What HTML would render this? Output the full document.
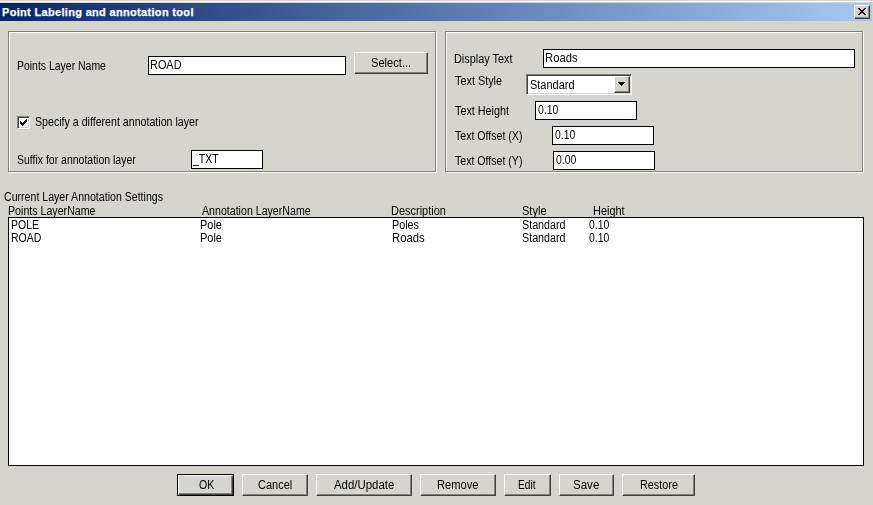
<!DOCTYPE html>
<html><head><meta charset="utf-8">
<style>
*{margin:0;padding:0;box-sizing:border-box}
html,body{width:873px;height:505px;overflow:hidden;background:#d5d4cd}
body{position:relative;font-family:"Liberation Sans",sans-serif;font-size:12px;color:#000}
.a{position:absolute}
.t{position:absolute;white-space:nowrap;line-height:14px;font-size:12px;transform-origin:0 0}
.title{position:absolute;left:0;top:3px;width:872px;height:18px;background:linear-gradient(to right,#0a246a,#a6caf0)}
.grp{position:absolute;border:1px solid #808080;box-shadow:inset 1px 1px 0 #fff,1px 1px 0 #fff}
.tb{position:absolute;background:#fff;border:1px solid #000}
.btn{position:absolute;background:#d5d4cd;border-top:1px solid #fff;border-left:1px solid #fff;border-right:1px solid #404040;border-bottom:1px solid #404040;box-shadow:inset -1px -1px 0 #808080}
.sunk{position:absolute;background:#fff;border-top:1px solid #808080;border-left:1px solid #808080;border-right:1px solid #fff;border-bottom:1px solid #fff;box-shadow:inset 1px 1px 0 #404040,inset -1px -1px 0 #d5d4cd}
</style></head><body>
<div class="a" style="left:0;top:0;width:873px;height:1px;background:#d5d4cd"></div>
<div class="a" style="left:0;top:1px;width:873px;height:1px;background:#fff"></div>
<div class="title"></div>
<div class="a" style="left:2px;top:5px;color:#fff;font-weight:bold;font-size:11px;line-height:14px;white-space:nowrap;letter-spacing:0.32px;-webkit-text-stroke:0.25px #fff">Point Labeling and annotation tool</div>
<div class="btn" style="left:854px;top:5px;width:16px;height:14px"></div>
<svg class="a" style="left:854px;top:5px" width="16" height="14" shape-rendering="crispEdges"><g fill="#000"><rect x="4" y="3" width="2" height="1"/><rect x="10" y="3" width="2" height="1"/><rect x="5" y="4" width="2" height="1"/><rect x="9" y="4" width="2" height="1"/><rect x="6" y="5" width="4" height="1"/><rect x="7" y="6" width="2" height="1"/><rect x="6" y="7" width="4" height="1"/><rect x="5" y="8" width="2" height="1"/><rect x="9" y="8" width="2" height="1"/><rect x="4" y="9" width="2" height="1"/><rect x="10" y="9" width="2" height="1"/></g></svg>
<div class="grp" style="left:8px;top:31px;width:428px;height:141px"></div>
<div class="grp" style="left:445px;top:31px;width:418px;height:141px"></div>
<div class="tb" style="left:148px;top:56px;width:198px;height:19px"></div>
<div class="tb" style="left:191px;top:150px;width:72px;height:19px"></div>
<div class="tb" style="left:543px;top:49px;width:312px;height:19px"></div>
<div class="tb" style="left:535px;top:101px;width:102px;height:19px"></div>
<div class="tb" style="left:552px;top:126px;width:102px;height:19px"></div>
<div class="tb" style="left:553px;top:151px;width:102px;height:19px"></div>
<div class="btn" style="left:354px;top:52px;width:74px;height:22px"></div>
<div class="sunk" style="left:17px;top:116px;width:13px;height:13px"></div>
<svg class="a" style="left:17px;top:116px" width="13" height="13" shape-rendering="crispEdges"><g fill="#000"><rect x="9" y="3" width="1" height="1"/><rect x="8" y="4" width="2" height="1"/><rect x="3" y="5" width="1" height="1"/><rect x="7" y="5" width="3" height="1"/><rect x="3" y="6" width="2" height="1"/><rect x="6" y="6" width="3" height="1"/><rect x="3" y="7" width="5" height="1"/><rect x="4" y="8" width="3" height="1"/><rect x="5" y="9" width="1" height="1"/></g></svg>
<div class="sunk" style="left:526px;top:74px;width:106px;height:21px"></div>
<div class="btn" style="left:614px;top:76px;width:16px;height:17px"></div>
<svg class="a" style="left:614px;top:76px" width="15" height="17" shape-rendering="crispEdges"><g fill="#000"><rect x="4" y="6" width="7" height="1"/><rect x="5" y="7" width="5" height="1"/><rect x="6" y="8" width="3" height="1"/><rect x="7" y="9" width="1" height="1"/></g></svg>
<div class="tb" style="left:8px;top:217px;width:856px;height:249px"></div>
<div class="a" style="left:177px;top:474px;width:57px;height:22px;background:#000"></div>
<div class="btn" style="left:178px;top:475px;width:55px;height:20px"></div>
<div class="btn" style="left:242px;top:474px;width:66px;height:22px"></div>
<div class="btn" style="left:316px;top:474px;width:96px;height:22px"></div>
<div class="btn" style="left:420px;top:474px;width:76px;height:22px"></div>
<div class="btn" style="left:504px;top:474px;width:47px;height:22px"></div>
<div class="btn" style="left:559px;top:474px;width:55px;height:22px"></div>
<div class="btn" style="left:622px;top:474px;width:73px;height:22px"></div>
<div class="a" style="left:0;top:0;width:873px;height:505px;will-change:transform">
<div class="t" style="left:17.13px;top:59px;transform:scaleX(0.8713)">Points Layer Name</div>
<div class="t" style="left:150.09px;top:58px;transform:scaleX(0.9091)">ROAD</div>
<div class="t" style="left:35.11px;top:115px;transform:scaleX(0.8859)">Specify a different annotation layer</div>
<div class="t" style="left:17.13px;top:153px;transform:scaleX(0.8741)">Suffix for annotation layer</div>
<div class="t" style="left:193.00px;top:152px;transform:scaleX(0.8750)">_TXT</div>
<div class="t" style="left:454.09px;top:52px;transform:scaleX(0.9062)">Display Text</div>
<div class="t" style="left:545.06px;top:51px;transform:scaleX(0.9394)">Roads</div>
<div class="t" style="left:455.00px;top:74px;transform:scaleX(0.9038)">Text Style</div>
<div class="t" style="left:530.09px;top:78px;transform:scaleX(0.9149)">Standard</div>
<div class="t" style="left:455.00px;top:104px;transform:scaleX(0.9000)">Text Height</div>
<div class="t" style="left:538.00px;top:103px;transform:scaleX(0.8696)">0.10</div>
<div class="t" style="left:455.00px;top:129px;transform:scaleX(0.8816)">Text Offset (X)</div>
<div class="t" style="left:555.00px;top:128px;transform:scaleX(0.8696)">0.10</div>
<div class="t" style="left:455.00px;top:154px;transform:scaleX(0.8816)">Text Offset (Y)</div>
<div class="t" style="left:556.00px;top:153px;transform:scaleX(0.8696)">0.00</div>
<div class="t" style="left:4.12px;top:190px;transform:scaleX(0.8827)">Current Layer Annotation Settings</div>
<div class="t" style="left:8.11px;top:204px;transform:scaleX(0.8866)">Points LayerName</div>
<div class="t" style="left:202.00px;top:204px;transform:scaleX(0.8852)">Annotation LayerName</div>
<div class="t" style="left:391.09px;top:204px;transform:scaleX(0.9138)">Description</div>
<div class="t" style="left:522.08px;top:204px;transform:scaleX(0.9200)">Style</div>
<div class="t" style="left:593.09px;top:204px;transform:scaleX(0.9118)">Height</div>
<div class="t" style="left:11.12px;top:218px;transform:scaleX(0.8750)">POLE</div>
<div class="t" style="left:200.09px;top:218px;transform:scaleX(0.9130)">Pole</div>
<div class="t" style="left:392.10px;top:218px;transform:scaleX(0.8966)">Poles</div>
<div class="t" style="left:522.11px;top:218px;transform:scaleX(0.8936)">Standard</div>
<div class="t" style="left:589.00px;top:218px;transform:scaleX(0.8696)">0.10</div>
<div class="t" style="left:11.12px;top:231px;transform:scaleX(0.8750)">ROAD</div>
<div class="t" style="left:200.09px;top:231px;transform:scaleX(0.9130)">Pole</div>
<div class="t" style="left:392.06px;top:231px;transform:scaleX(0.9394)">Roads</div>
<div class="t" style="left:522.11px;top:231px;transform:scaleX(0.8936)">Standard</div>
<div class="t" style="left:589.00px;top:231px;transform:scaleX(0.8696)">0.10</div>
<div class="t" style="left:371.07px;top:56px;transform:scaleX(0.9268)">Select...</div>
<div class="t" style="left:199.00px;top:478px;transform:scaleX(0.8824)">OK</div>
<div class="t" style="left:258.08px;top:478px;transform:scaleX(0.9167)">Cancel</div>
<div class="t" style="left:334.00px;top:478px;transform:scaleX(0.9524)">Add/Update</div>
<div class="t" style="left:437.07px;top:478px;transform:scaleX(0.9302)">Remove</div>
<div class="t" style="left:518.15px;top:478px;transform:scaleX(0.8500)">Edit</div>
<div class="t" style="left:573.04px;top:478px;transform:scaleX(0.9615)">Save</div>
<div class="t" style="left:640.10px;top:478px;transform:scaleX(0.9024)">Restore</div>
</div>
</body></html>
